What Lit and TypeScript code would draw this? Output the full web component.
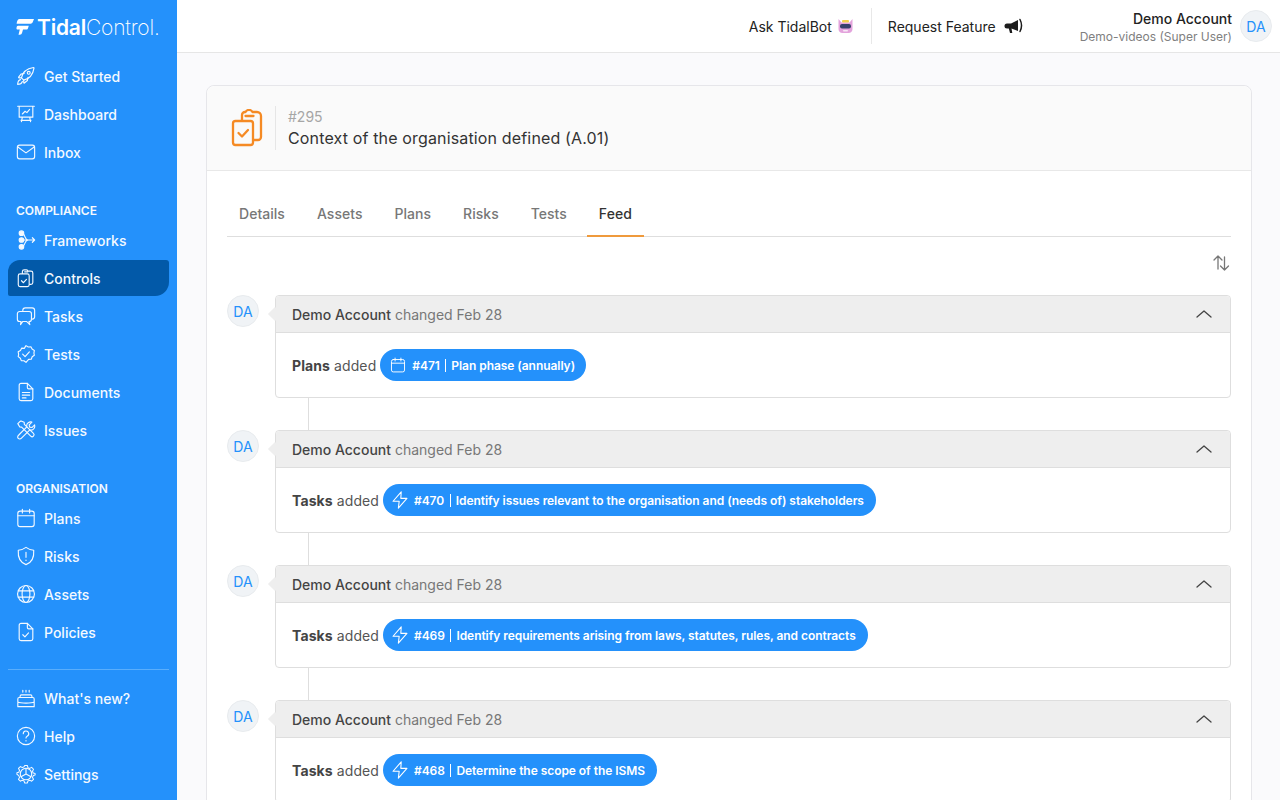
import { LitElement, html, css, svg } from 'lit';
import { customElement } from 'lit/decorators.js';

const icons: Record<string, any> = {
  rocket: svg`<path d="M8.500 15.500l-2.500-2.500c1-5 4.800-10 13.200-11.300.4 0 .6.200.6.600C18.500 10.500 13.800 14.300 8.500 15.500z"/><path d="M6 13H3.300c-.4 0-.6-.4-.4-.7L5.500 9l3.500-.7M8.500 15.500v2.800c0 .4.400.6.700.4l3.300-2.700.7-3.500"/><circle cx="14" cy="7.500" r="1.600"/><path d="M5 15c-1.800.3-3 2-3.200 5.200 2.500 0 4.500-1 5.200-3.200"/>`,
  dashboard: svg`<path d="M1.800 2.500h18.400M3.500 2.500v12h15v-12M7 14.500l-1 5M15 14.500l1 5M5.500 18h11"/><path d="M7 11l3-3 2 1.500 3-3.500"/>`,
  inbox: svg`<rect x="1.500" y="3.500" width="19" height="15" rx="2.500"/><path d="M2 5.500l9 6.500 9-6.500"/>`,
  frameworks: svg`<circle cx="6" cy="3.500" r="2.500" fill="currentColor"/><circle cx="6" cy="11" r="2.500" fill="currentColor"/><circle cx="6" cy="18.500" r="2.500" fill="currentColor"/><path d="M6 3.500c4.500 0 3 7.500 7.500 7.500M6 18.500c4.500 0 3-7.500 7.500-7.500M6 11h14.500M18 8.500l2.500 2.500-2.500 2.500"/>`,
  controls: svg`<rect x="2.500" y="6.500" width="12" height="14" rx="2"/><path d="M7 6V4a2 2 0 0 1 2-2h2.500c.8 0 1.500.7 1.500 1.500h3.500a2 2 0 0 1 2 2V16a2 2 0 0 1-2 2h-1.500M13 4.200h-3.500"/><path d="M6 14l2.200 2.200 3.300-3.700"/>`,
  tasks: svg`<path d="M7.500 5.500V4.800a2.800 2.800 0 0 1 2.800-2.800h7.400A2.800 2.800 0 0 1 20.500 4.800v7a2.800 2.800 0 0 1-2.500 2.700"/><path d="M4 6h10.500A2.500 2.500 0 0 1 17 8.500v6a2.500 2.500 0 0 1-2.500 2.500h-.3l1 3.500-3.700-3.500H7.500L5 20.500 5.500 17H4a2.500 2.500 0 0 1-2.500-2.500v-6A2.500 2.500 0 0 1 4 6z"/>`,
  tests: svg`<path d="M11 1.800l2.500 1.500 2.900-.2 1.300 2.500 2.500 1.500-.5 2.900.5 2.400-2.400 1.700-1 2.700-2.900.1L11 20.200l-2.300-1.800-2.900-.1-1-2.700-2.400-1.700.5-2.400-.5-2.900 2.500-1.500 1.300-2.500 2.900.2z"/><path d="M7.300 11.200l2.700 2.700 4.700-5.300"/>`,
  documents: svg`<path d="M5.500 1.500h7L18.500 7.500V18.500a2 2 0 0 1-2 2H5.500a2 2 0 0 1-2-2v-15a2 2 0 0 1 2-2z"/><path d="M12.500 1.500V6a1.500 1.500 0 0 0 1.500 1.500h4.500M7 11.500h8M7 14.500h8M7 17.500h4"/>`,
  issues: svg`<path d="M4 2L2 4l2 3.500 2.200.3 10 10c.8.800 2.200.800 3 0s.8-2.200 0-3l-10-10L9 2.500 5.500 1z"/><path d="M20.500 5L17.500 8 15 7.500 14.500 5l3-3c-3-.8-5.800 1.200-5.800 4 0 .5 0 .9.200 1.300L2.800 16.500c-1.200 1.100-1.200 2.600-.3 3.500.9.900 2.400.9 3.500-.3l9.200-9.100c.4.200.8.200 1.300.2 2.800 0 4.800-2.800 4-5.800z" transform="translate(0 .3)"/>`,
  plans: svg`<rect x="2" y="3.500" width="18" height="17" rx="2.500"/><path d="M2 8.500h18M7 1.500v4M15 1.500v4"/>`,
  risks: svg`<path d="M11 1.500c2.500 1.800 5.200 2.900 8.500 3.200.5 7-1.500 13.300-8.500 15.800-7-2.500-9-8.800-8.500-15.800 3.300-.3 6-1.400 8.500-3.200z"/><path d="M11 7v5.500M11 15.500v.4"/>`,
  assets: svg`<circle cx="11" cy="11" r="9.300"/><path d="M2.500 7.500h17M2.500 14.500h17"/><ellipse cx="11" cy="11" rx="4.300" ry="9.300"/>`,
  policies: svg`<path d="M5.500 1.500h7L18.500 7.500V18.500a2 2 0 0 1-2 2H5.500a2 2 0 0 1-2-2v-15a2 2 0 0 1 2-2z"/><path d="M12.500 1.500V6a1.500 1.500 0 0 0 1.500 1.500h4.500M7.500 14l2.300 2.300 4-4.300"/>`,
  news: svg`<path d="M4.500 10.500V9A1.500 1.500 0 0 1 6 7.500h10A1.500 1.500 0 0 1 17.500 9v1.500M3.500 10.500h15a1.500 1.500 0 0 1 1.500 1.500v8.500H2V12a1.500 1.500 0 0 1 1.500-1.500zM2 15.500c3 1.500 15 1.500 18 0M7.500 2.500v2M11 2.500v2M14.500 2.500v2"/>`,
  help: svg`<circle cx="11" cy="11" r="9.500"/><path d="M8 8.500a3 3 0 1 1 4.300 2.700c-.9.500-1.300 1-1.300 2M11 16v.4"/>`,
  settings: svg`<path d="M9.300 1.500h3.400l.6 2.500 2.200.9 2.300-1.300 2.300 2.300-1.300 2.300.9 2.200 2.300.6v2l-2.300.6-.9 2.200 1.300 2.300-2.300 2.300-2.300-1.300-2.200.9-.6 2.500H9.300l-.6-2.500-2.200-.9-2.300 1.300-2.300-2.300 1.300-2.300-.9-2.200L0 12v-2l2.300-.6.9-2.200L1.900 4.900 4.200 2.600l2.300 1.300 2.200-.9z" transform="translate(1 .4) scale(.91)"/><circle cx="11" cy="11" r="6.300"/><path d="M11 4.700V11l5.500 3M11 11l-5.500 3"/>`,
  bolt: svg`<path d="M12.500 1L2.500 12.500h7.500l-1 8.500 10.500-12h-7.500z"/>`,
};

const navTop = [
  ['rocket', 'Get Started'],
  ['dashboard', 'Dashboard'],
  ['inbox', 'Inbox'],
];
const navCompliance = [
  ['frameworks', 'Frameworks'],
  ['controls', 'Controls'],
  ['tasks', 'Tasks'],
  ['tests', 'Tests'],
  ['documents', 'Documents'],
  ['issues', 'Issues'],
];
const navOrg = [
  ['plans', 'Plans'],
  ['risks', 'Risks'],
  ['assets', 'Assets'],
  ['policies', 'Policies'],
];
const navBottom = [
  ['news', "What's new?"],
  ['help', 'Help'],
  ['settings', 'Settings'],
];

const feed = [
  { kind: 'Plans', icon: 'plans', id: '#471', label: 'Plan phase (annually)' },
  { kind: 'Tasks', icon: 'bolt', id: '#470', label: 'Identify issues relevant to the organisation and (needs of) stakeholders' },
  { kind: 'Tasks', icon: 'bolt', id: '#469', label: 'Identify requirements arising from laws, statutes, rules, and contracts' },
  { kind: 'Tasks', icon: 'bolt', id: '#468', label: 'Determine the scope of the ISMS' },
];

@customElement('app-root')
export class AppRoot extends LitElement {
  static styles = css`
    :host {
      display: flex;
      width: 1280px;
      height: 800px;
      overflow: hidden;
      font-family: Inter, "Liberation Sans", sans-serif;
      font-size: 14px;
      color: #333;
      background: #fafafc;
    }

    .sidebar {
      width: 177px;
      flex: none;
      background: #2491fb;
      color: #fff;
      padding: 0 8px;
      box-sizing: border-box;
    }

    .logo {
      display: flex;
      align-items: center;
      height: 54px;
      padding-left: 8px;
      font-size: 21px;
      letter-spacing: -0.2px;
      margin-bottom: 4px;
    }

    .logo svg {
      width: 18px;
      height: 16px;
      margin-right: 3px;
      fill: #fff;
    }

    .logo b {
      font-weight: 600;
    }

    .logo span {
      font-weight: 200;
    }

    .nav-item {
      display: flex;
      align-items: center;
      gap: 8px;
      height: 36px;
      margin-bottom: 2px;
      padding-left: 8px;
      font-weight: 500;
      color: #f4f9ff;
      border-radius: 12px 3px 14px 2px;
    }

    .nav-item svg {
      width: 20px;
      height: 20px;
      flex: none;
      stroke-width: 1.250;
    }

    .nav-item.active {
      background: #0259a8;
    }

    .section {
      font-size: 12px;
      font-weight: 600;
      height: 16px;
      line-height: 16px;
      padding-left: 8px;
      margin-top: 33px;
      margin-bottom: 3px;
      color: #f4f9ff;
    }

    .divider {
      border-top: 1px solid #5aaefc;
      margin-top: 19px;
      margin-bottom: 10px;
    }

    .main {
      flex: 1;
      min-width: 0;
      display: flex;
      flex-direction: column;
    }

    .topbar {
      height: 53px;
      flex: none;
      box-sizing: border-box;
      background: #fff;
      border-bottom: 1px solid #e6e6e6;
      display: flex;
      align-items: center;
      justify-content: flex-end;
      padding-right: 8px;
      color: #222;
    }

    .top-link {
      display: flex;
      align-items: center;
      gap: 5px;
    }

    .top-sep {
      width: 1px;
      height: 36px;
      margin: 0 16px 0 17px;
      background: #e8e8e8;
    }

    .megaphone {
      margin-left: 3px;
    }

    .account {
      margin-left: 57px;
      display: flex;
      align-items: center;
      gap: 8px;
    }

    .account-text {
      text-align: right;
      line-height: 17px;
      padding-top: 3px;
    }

    .account-text div:first-child {
      font-weight: 500;
      font-size: 14px;
    }

    .account-text div:last-child {
      font-size: 12px;
      color: #808080;
      margin-top: 1px;
    }

    .avatar {
      width: 32px;
      height: 32px;
      flex: none;
      box-sizing: border-box;
      border-radius: 50%;
      background: #f0f3f6;
      border: 1px solid #e8ebee;
      color: #2491fb;
      display: flex;
      align-items: center;
      justify-content: center;
      font-size: 14px;
    }

    .content {
      flex: 1;
      min-height: 0;
      padding: 32px 28px 0 29px;
    }

    .card {
      background: #fff;
      border: 1px solid #e6e6ea;
      border-radius: 8px 8px 0 0;
      height: 800px;
      box-sizing: border-box;
    }

    .card-head {
      height: 85px;
      box-sizing: border-box;
      background: #fafafa;
      border-bottom: 1px solid #e8e8e8;
      border-radius: 8px 8px 0 0;
      display: flex;
      align-items: center;
      padding-left: 24px;
    }

    .card-head svg {
      width: 32px;
      height: 38px;
      color: #f58a24;
    }

    .head-sep {
      width: 1px;
      height: 44px;
      background: #e6e6e6;
      margin: 0 12px 0 12px;
    }

    .num {
      color: #a6a6a6;
      line-height: 20px;
    }

    .title {
      font-size: 16px;
      font-weight: 400;
      letter-spacing: 0.15px;
      color: #333;
      line-height: 22px;
    }

    .body {
      padding: 0 20px;
    }

    .tabs {
      display: flex;
      height: 65px;
      align-items: flex-end;
      border-bottom: 1px solid #dedede;
    }

    .tab {
      padding: 0 12px 13px;
      margin-right: 8px;
      line-height: 17px;
      font-weight: 500;
      letter-spacing: 0.03px;
      color: #777;
      margin-bottom: -1px;
      border-bottom: 2px solid transparent;
    }

    .tab.active {
      color: #333;
      border-bottom-color: #ef9a3c;
    }

    .sort {
      display: flex;
      justify-content: flex-end;
      height: 58px;
      align-items: flex-start;
      padding-top: 17px;
      box-sizing: border-box;
    }

    .sort svg {
      width: 18px;
      height: 18px;
      color: #777;
      margin-right: 1px;
    }

    .item {
      display: flex;
      gap: 16px;
      margin-bottom: 32px;
      position: relative;
    }

    .item + .item::before {
      content: "";
      position: absolute;
      left: 81px;
      top: -32px;
      width: 1px;
      height: 32px;
      background: #dedede;
    }

    .box {
      flex: 1;
      min-width: 0;
      border: 1px solid #dedede;
      border-radius: 4px;
      position: relative;
      background: #fff;
    }

    .box::before {
      content: "";
      position: absolute;
      left: -6px;
      top: 13px;
      width: 10px;
      height: 10px;
      transform: rotate(45deg);
      background: #eee;
    }

    .box-head {
      height: 37px;
      position: relative;
      box-sizing: border-box;
      background: #eee;
      border-bottom: 1px solid #dedede;
      border-radius: 4px 4px 0 0;
      display: flex;
      align-items: center;
      justify-content: space-between;
      padding: 0 18px 0 16px;
      color: #777;
    }

    .box-head b {
      font-weight: 500;
      color: #444;
    }

    .box-head svg {
      width: 16px;
      height: 16px;
      color: #444;
      margin-top: -1px;
    }

    .box-body {
      height: 64px;
      padding-left: 16px;
      display: flex;
      align-items: center;
      gap: 4px;
      color: #555;
      letter-spacing: 0.1px;
    }

    .box-body b {
      font-weight: 700;
      color: #444;
    }

    .chip {
      display: inline-flex;
      align-items: center;
      height: 32px;
      padding: 0 12px 0 10px;
      border-radius: 16px;
      background: #2491fb;
      color: #fff;
      font-size: 12px;
      font-weight: 600;
      letter-spacing: -0.05px;
      white-space: nowrap;
    }

    .chip.plans {
      padding-right: 11px;
    }

    .chip.bolt {
      padding-left: 8px;
    }

    .chip svg {
      width: 16px;
      height: 16px;
      margin-right: 6px;
      stroke-width: 1.300;
    }

    .chip.bolt svg {
      width: 18px;
      height: 18px;
      margin-right: 5px;
    }

    .chip i {
      font-style: normal;
      font-weight: 600;
    }

    .chip em {
      font-style: normal;
      width: 1px;
      height: 13px;
      background: #fff;
      margin: 0 5px 0 5.500px;
    }
  `;

  renderIcon(name: string) {
    return html`<svg viewBox="0 0 22 22" fill="none" stroke="currentColor" stroke-width="1.500" stroke-linecap="round" stroke-linejoin="round">${icons[name]}</svg>`;
  }

  renderNav(items: string[][], active = '') {
    return items.map(
      ([icon, label]) => html`
        <div class="nav-item ${label === active ? 'active' : ''}">
          ${this.renderIcon(icon)}<span>${label}</span>
        </div>
      `
    );
  }

  render() {
    return html`
      <aside class="sidebar">
        <div class="logo">
          <svg viewBox="0 0 18 16"><path d="M3.500 0H18l-1.300 3.300c-.4.900-1.100 1.400-2 1.400H.6C.9 2 2 0 3.500 0zM2 6.800h10.800l-.9 2.600c-.3.800-1 1.200-1.800 1.200H7l-.9 3.200c-.3 1.300-1.100 2-2.300 2H2.500l1.300-5.200H2c-1.100 0-1.700-.6-1.500-1.600.2-1.300.6-2.200 1.500-2.200z"/></svg>
          <b>Tidal</b><span>Control.</span>
        </div>
        ${this.renderNav(navTop)}
        <div class="section">COMPLIANCE</div>
        ${this.renderNav(navCompliance, 'Controls')}
        <div class="section">ORGANISATION</div>
        ${this.renderNav(navOrg)}
        <div class="divider"></div>
        ${this.renderNav(navBottom)}
      </aside>
      <div class="main">
        <header class="topbar">
          <div class="top-link">
            Ask TidalBot
            <svg width="17" height="17" viewBox="0 0 17 17">
              <path d="M1.500 1l3 3.500h8l3-3.500v9.500a4 4 0 0 1-4 4.500h-6a4 4 0 0 1-4-4.500z" fill="#e3a3dc"/>
              <rect x="5" y="2" width="7" height="2.500" rx="1" fill="#f2d04e"/>
              <rect x="3" y="6" width="11" height="4.500" rx="2" fill="#37406b"/>
              <rect x="6" y="12" width="5" height="1.500" rx=".7" fill="#f7e8f5"/>
            </svg>
          </div>
          <div class="top-sep"></div>
          <div class="top-link">
            Request Feature
            <svg class="megaphone" width="19" height="17" viewBox="0 0 19 17">
              <path d="M3 5.500h4L14 2v11L7.500 10.500l.8 4.500H6L4.800 10.500H3a2.500 2.500 0 0 1 0-5z" fill="#1c1c1c"/>
              <path d="M16 1.500c1.800 3.500 1.800 8.500 0 12" fill="none" stroke="#1c1c1c" stroke-width="1.500" stroke-linecap="round"/>
            </svg>
          </div>
          <div class="account">
            <div class="account-text">
              <div>Demo Account</div>
              <div>Demo-videos (Super User)</div>
            </div>
            <div class="avatar">DA</div>
          </div>
        </header>
        <div class="content">
          <section class="card">
            <div class="card-head">
              <svg viewBox="0 0 32 38" fill="none" stroke="currentColor" stroke-width="2.300" stroke-linecap="round" stroke-linejoin="round">
                <rect x="2" y="12" width="20" height="24" rx="2.500"/>
                <path d="M11 11V6a3 3 0 0 1 3-3h.5a4 4 0 0 1 7 0H26a4 4 0 0 1 4 4v21a3 3 0 0 1-3 3h-4M14.500 7h8"/>
                <path d="M7.500 24l3.500 3.500 6-6.500"/>
              </svg>
              <div class="head-sep"></div>
              <div>
                <div class="num">#295</div>
                <div class="title">Context of the organisation defined (A.01)</div>
              </div>
            </div>
            <div class="body">
              <nav class="tabs">
                ${['Details', 'Assets', 'Plans', 'Risks', 'Tests', 'Feed'].map(
                  (t) => html`<div class="tab ${t === 'Feed' ? 'active' : ''}">${t}</div>`
                )}
              </nav>
              <div class="sort">
                <svg viewBox="0 0 18 18" fill="none" stroke="currentColor" stroke-width="1.300" stroke-linecap="round" stroke-linejoin="round">
                  <path d="M6 15V2M2 6l4-4 4 4M12.500 3v13M8.500 12l4 4 4-4"/>
                </svg>
              </div>
              ${feed.map(
                (f) => html`
                  <div class="item">
                    <div class="avatar">DA</div>
                    <div class="box">
                      <div class="box-head">
                        <span><b>Demo Account</b> changed Feb 28</span>
                        <svg viewBox="0 0 16 16" fill="none" stroke="currentColor" stroke-width="1.300" stroke-linecap="round" stroke-linejoin="round"><path d="M1 11l7-6 7 6"/></svg>
                      </div>
                      <div class="box-body">
                        <b>${f.kind}</b> added
                        <span class="chip ${f.icon}">
                          ${this.renderIcon(f.icon)}<i>${f.id}</i><em></em>${f.label}
                        </span>
                      </div>
                    </div>
                  </div>
                `
              )}
            </div>
          </section>
        </div>
      </div>
    `;
  }
}
